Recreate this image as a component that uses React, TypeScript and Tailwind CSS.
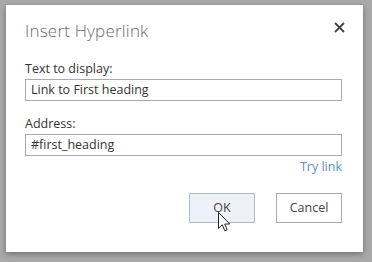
import React from 'react';

const Cursor = () => (
  <svg
    width="13"
    height="21"
    viewBox="0 0 13 21"
    className="absolute left-[218px] top-[212px]"
  >
    <path
      d="M0.5 0.5 L0.5 16.5 L4.3 12.8 L6.8 18.8 L9.2 17.8 L6.7 12 L11.8 12 Z"
      fill="#ffffff"
      stroke="#222222"
      strokeWidth="1"
      strokeLinejoin="round"
    />
  </svg>
);

const Field = ({ label, value }: { label: string; value: string }) => (
  <div className="flex flex-col">
    <label className="text-[12.5px] leading-[16px] text-[#333]">{label}</label>
    <div className="mt-[2px] h-[22px] border border-[#ababab] px-[5px] flex items-center text-[12.5px] text-[#333]">
      {value}
    </div>
  </div>
);

export default function App() {
  return (
    <div
      className="relative w-[372px] h-[262px] bg-[#a9a9a9] pt-[5px] pl-[6px] overflow-hidden"
      style={{ fontFamily: '"Open Sans", "Noto Sans", sans-serif' }}
    >
      <div className="w-[357px] h-[247px] bg-white shadow-[0_2px_6px_rgba(0,0,0,0.35)] pl-[19px] pr-[21px] pt-[14px] flex flex-col">
        <div className="flex items-start justify-between">
          <h1 className="text-[17px] leading-[24px] font-light text-[#6b6b6b] tracking-[0.2px]">
            Insert Hyperlink
          </h1>
          <button className="mt-[1px] -mr-[4px] w-[14px] h-[14px] flex items-center justify-center">
            <svg width="11" height="11" viewBox="0 0 11 11">
              <path d="M1 1 L10 10 M10 1 L1 10" stroke="#444" strokeWidth="1.8" />
            </svg>
          </button>
        </div>

        <div className="mt-[18px]">
          <Field label="Text to display:" value="Link to First heading" />
        </div>
        <div className="mt-[15px]">
          <Field label="Address:" value="#first_heading" />
        </div>
        <div className="flex justify-end mt-[3px]">
          <a className="text-[12.5px] leading-[16px] text-[#5b8fc6]">Try link</a>
        </div>

        <div className="flex justify-end gap-[21px] mt-[18px]">
          <button className="w-[66px] h-[30px] border border-[#b1bccb] bg-[#eef2f8] text-[12.5px] text-[#444]">
            OK
          </button>
          <button className="w-[66px] h-[30px] border border-[#ababab] bg-white text-[12.5px] text-[#444]">
            Cancel
          </button>
        </div>
      </div>
      <Cursor />
    </div>
  );
}
